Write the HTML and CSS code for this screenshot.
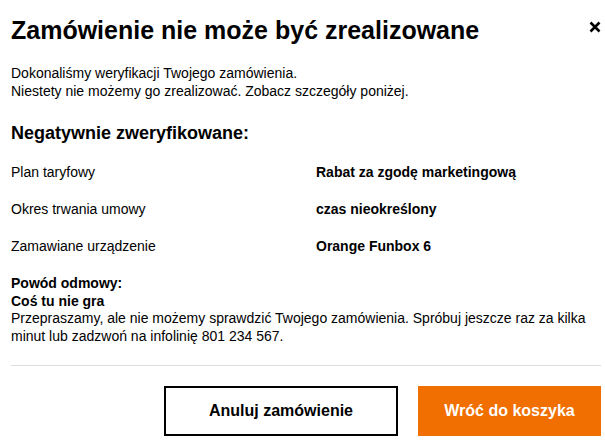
FILE: index.html
```html
<!DOCTYPE html>
<html lang="pl">
<head>
<meta charset="utf-8">
<title>Zamówienie nie może być zrealizowane</title>
<link rel="stylesheet" href="styles.css">
</head>
<body>
<div class="modal">
  <header class="modal-header">
    <h1 class="modal-title">Zamówienie nie może być zrealizowane</h1>
    <button class="close" aria-label="Zamknij">
      <svg width="12" height="12" viewBox="0 0 12 12"><path d="M1.5 1.5 L10.5 10.5 M10.5 1.5 L1.5 10.5" stroke="#000" stroke-width="2.6" stroke-linecap="butt"/></svg>
    </button>
  </header>
  <p class="intro">Dokonaliśmy weryfikacji Twojego zamówienia.<br>Niestety nie możemy go zrealizować. Zobacz szczegóły poniżej.</p>
  <h2 class="section-title">Negatywnie zweryfikowane:</h2>
  <dl class="details">
    <div class="detail-row"><dt>Plan taryfowy</dt><dd>Rabat za zgodę marketingową</dd></div>
    <div class="detail-row"><dt>Okres trwania umowy</dt><dd>czas nieokreślony</dd></div>
    <div class="detail-row"><dt>Zamawiane urządzenie</dt><dd>Orange Funbox 6</dd></div>
  </dl>
  <div class="reason">
    <p class="reason-label">Powód odmowy:</p>
    <p class="reason-title">Coś tu nie gra</p>
    <p class="reason-text">Przepraszamy, ale nie możemy sprawdzić Twojego zamówienia. Spróbuj jeszcze raz za kilka minut lub zadzwoń na infolinię 801 234 567.</p>
  </div>
  <footer class="modal-footer">
    <button class="btn btn-outline">Anuluj zamówienie</button>
    <button class="btn btn-primary">Wróć do koszyka</button>
  </footer>
</div>
</body>
</html>
```

FILE: styles.css
```css
* { box-sizing: border-box; }
html, body { margin: 0; padding: 0; background: #fff; }
body {
  font-family: "Liberation Sans", Arial, sans-serif;
  color: #000;
  font-size: 14px;
}
.modal {
  width: 605px;
  padding: 0 4px 0 11px;
}
.modal-header {
  display: flex;
  justify-content: space-between;
  align-items: flex-start;
  padding-top: 16px;
}
.modal-title {
  margin: 0;
  font-size: 25px;
  line-height: 28px;
  font-weight: 700;
}
.close {
  border: 0;
  background: none;
  padding: 0;
  margin-top: 5px;
  margin-right: 0;
  width: 12px;
  height: 12px;
  display: block;
}
.close svg { display: block; }
.intro {
  margin: 20px 0 0;
  line-height: 18px;
}
.section-title {
  margin: 22px 0 0;
  font-size: 18px;
  line-height: 22px;
  font-weight: 700;
}
.details {
  margin: 19px 0 0;
  display: flex;
  flex-direction: column;
  gap: 19px;
}
.detail-row {
  display: grid;
  grid-template-columns: 305px 1fr;
  line-height: 18px;
}
.detail-row dt, .detail-row dd { margin: 0; }
.detail-row dd { font-weight: 700; }
.reason {
  margin-top: 20px;
  line-height: 17.5px;
}
.reason p { margin: 0; }
.reason-label, .reason-title { font-weight: 700; }
.modal-footer {
  margin-top: 20px;
  border-top: 1px solid #ddd;
  padding-top: 20px;
  display: flex;
  justify-content: flex-end;
  gap: 20px;
}
.btn {
  font-family: "Liberation Sans", Arial, sans-serif;
  font-size: 16px;
  font-weight: 700;
  height: 50px;
  padding: 0;
  cursor: pointer;
}
.btn-outline {
  width: 234px;
  background: #fff;
  color: #000;
  border: 2px solid #000;
}
.btn-primary {
  width: 183px;
  background: #f16e00;
  color: #fff;
  border: 2px solid #f16e00;
}
```
